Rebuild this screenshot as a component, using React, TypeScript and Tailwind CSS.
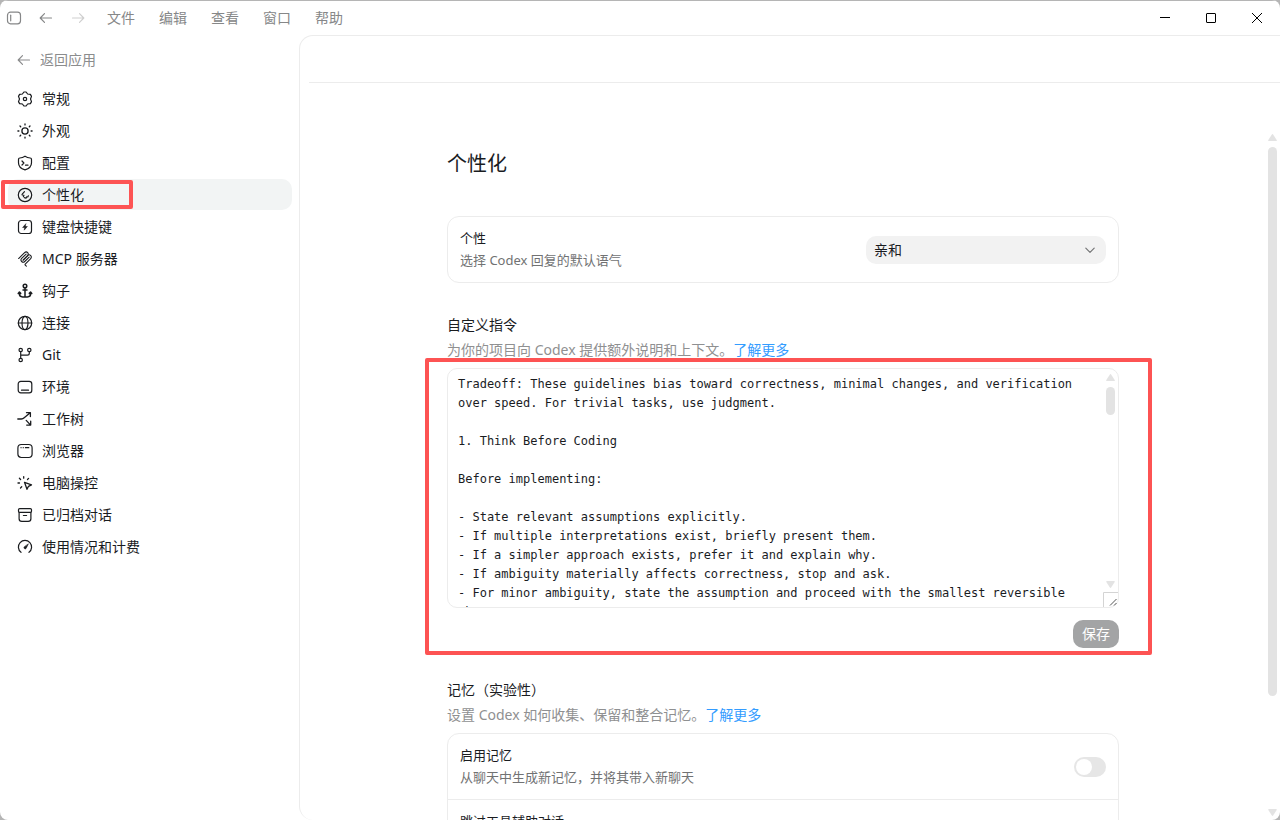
import type { ReactNode } from 'react';

function Icon({ children, className = 'size-4' }: { children: ReactNode; className?: string }) {
  return (
    <svg
      viewBox="0 0 16 16"
      className={`shrink-0 ${className}`}
      fill="none"
      stroke="currentColor"
      strokeWidth="1.2"
      strokeLinecap="round"
      strokeLinejoin="round"
      aria-hidden="true"
    >
      {children}
    </svg>
  );
}

const arrowLeft = <path d="M13.5 8H2.3M6.5 3.7 2.2 8l4.3 4.3" />;
const arrowRight = <path d="M2.5 8h11.2M9.5 3.7 13.8 8l-4.3 4.3" />;

const navItems: { label: string; icon: ReactNode; active?: boolean }[] = [
  {
    label: '常规',
    icon: (
      <>
        <path d="M6.9 1h2.2l1.5 2 2.8.4 1.1 2L13.5 8l1 2.600-1.100 2-2.800.4-1.500 2H6.900l-1.500-2-2.800-.4-1.100-2L2.500 8l-1-2.600 1.100-2L5.400 3Z" />
        <circle cx="8" cy="8" r="1.7" />
      </>
    ),
  },
  {
    label: '外观',
    icon: (
      <g strokeWidth="1.3">
        <circle cx="8" cy="8" r="3.1" />
        <path d="M8 .9v1M8 14.1v1M.9 8h1M14.1 8h1M3 3l.7.7M12.3 12.3l.7.7M3 13l.7-.7M12.3 3.7 13 3" />
      </g>
    ),
  },
  {
    label: '配置',
    icon: (
      <>
        <path d="M8 1.2c1.6 1 3.3 1.6 5.2 1.8.8.1 1.3.6 1.3 1.4v3.4c0 3.7-2.6 6-6.5 7.1-3.9-1.1-6.5-3.4-6.5-7.1V4.4c0-.8.5-1.3 1.3-1.4C4.7 2.8 6.4 2.2 8 1.2Z" />
        <path d="m5 6 1.9 2L5 10M8.5 10.2h2.5" />
      </>
    ),
  },
  {
    label: '个性化',
    active: true,
    icon: (
      <>
        <circle cx="8" cy="8" r="6.7" />
        <path d="M7.5 4.6 5.2 7.2c-.3.3-.1.7.3.8l1.4.3-.5 1.4M11.4 8.8l-.6 1.2-1.2-.1-.6 1.3-1.6-.6" />
      </>
    ),
  },
  {
    label: '键盘快捷键',
    icon: (
      <>
        <rect x="1.5" y="1.5" width="13" height="13" rx="2.8" />
        <path d="M8.700 4.900 5.600 8.500h2l-.4 2.700 3.200-3.700h-2Z" fill="currentColor" strokeWidth=".5" />
      </>
    ),
  },
  {
    label: 'MCP 服务器',
    icon: (
      <g transform="scale(.0889)" strokeWidth="12">
        <path d="M18 84.853 85.882 16.971c9.373-9.373 24.569-9.373 33.941 0 9.373 9.372 9.373 24.568 0 33.941l-51.265 51.265" />
        <path d="m69.265 101.47 50.558-50.558c9.373-9.373 24.569-9.373 33.942 0l.353.353c9.373 9.373 9.373 24.569 0 33.941L92.725 146.6c-3.124 3.124-3.124 8.189 0 11.313l12.606 12.607" />
        <path d="M102.853 33.941 52.648 84.146c-9.372 9.372-9.372 24.568 0 33.941 9.373 9.372 24.569 9.372 33.941 0l50.205-50.205" />
      </g>
    ),
  },
  {
    label: '钩子',
    icon: (
      <g strokeWidth="1.5">
        <circle cx="8" cy="3" r="1.8" />
        <path d="M8 4.8v9M6 7h4M1.2 10.400l1.200-1.300 1.300 1.300M14.800 10.400l-1.200-1.300-1.300 1.300M2.400 9.300v1.500c0 2 1.200 3.100 3.200 3.100h4.800c2 0 3.200-1.100 3.200-3.100V9.300" />
      </g>
    ),
  },
  {
    label: '连接',
    icon: (
      <>
        <circle cx="8" cy="8" r="6.7" />
        <ellipse cx="8" cy="8" rx="3" ry="6.7" />
        <path d="M1.3 8h13.4" />
      </>
    ),
  },
  {
    label: 'Git',
    icon: (
      <>
        <circle cx="3.7" cy="3" r="1.7" />
        <circle cx="12.3" cy="3" r="1.7" />
        <circle cx="3.7" cy="13" r="1.7" />
        <path d="M3.7 4.7v6.6M12.3 4.7v1.5c0 1.2-.7 1.9-1.9 1.9H3.7" />
      </>
    ),
  },
  {
    label: '环境',
    icon: (
      <>
        <rect x="1.2" y="2.3" width="13.6" height="11.6" rx="2.6" />
        <path d="M4.5 11.2h7" />
      </>
    ),
  },
  {
    label: '工作树',
    icon: (
      <path
        d="M.8 8h3.5c1.3 0 2-.3 2.9-1.2l6-5M9.500 1.700h3.900v3.900M9.200 9.400l4.200 4.500M13.700 10.200v3.900H9.700"
        strokeWidth="1.3"
      />
    ),
  },
  {
    label: '浏览器',
    icon: (
      <>
        <rect x=".9" y="1.5" width="14.2" height="13" rx="3.4" />
        <path d="M4 4.7h.1M6.2 4.7h.1M8.4 4.7h3.4" />
      </>
    ),
  },
  {
    label: '电脑操控',
    icon: (
      <g strokeWidth="1.3">
        <path d="m7.5 7.3 7 2.5-3 1.5-1.5 3Z" />
        <path d="M6.7 1.6v1.6M2.4 3.3l1.2 1.2M1 8h1.5M3.5 13l1.2-1.2M11.6 3.4l-1.1 1.1" />
      </g>
    ),
  },
  {
    label: '已归档对话',
    icon: (
      <>
        <rect x="1.5" y="1.6" width="13" height="3.8" rx="1.2" />
        <path d="M2.1 5.4v6.3c0 1.7 1 2.7 2.7 2.7h6.4c1.7 0 2.7-1 2.7-2.7V5.400M6.400 8.500h3.200" />
      </>
    ),
  },
  {
    label: '使用情况和计费',
    icon: (
      <>
        <path d="M4 13.3A6.6 6.6 0 1 1 12 13.3" />
        <path d="m11.2 5.2-2.1 4.2a1.2 1.2 0 1 1-1.9-1.5Z" fill="currentColor" strokeWidth=".6" />
      </>
    ),
  },
];

const instructions = `Tradeoff: These guidelines bias toward correctness, minimal changes, and verification over speed. For trivial tasks, use judgment.

1. Think Before Coding

Before implementing:

- State relevant assumptions explicitly.
- If multiple interpretations exist, briefly present them.
- If a simpler approach exists, prefer it and explain why.
- If ambiguity materially affects correctness, stop and ask.
- For minor ambiguity, state the assumption and proceed with the smallest reversible change.`;

function Triangle({ down = false }: { down?: boolean }) {
  return (
    <svg viewBox="0 0 9 7" className="h-[7px] w-[9px] shrink-0 fill-[#e3e3e3]" aria-hidden="true">
      {down ? (
        <path d="M1 0h7q1.2 0 .7 1L5.3 6.3q-.8 1.2-1.6 0L.3 1Q-.2 0 1 0Z" />
      ) : (
        <path d="M1 7h7q1.2 0 .7-1L5.3.7q-.8-1.2-1.6 0L.3 6Q-.2 7 1 7Z" />
      )}
    </svg>
  );
}

function TitleBar() {
  return (
    <header className="flex h-[35px] shrink-0 items-center justify-between border-t border-[#b5b5b5] text-[#868788]">
      <div className="flex items-center pl-[6px]">
        <button aria-label="切换边栏" className="flex">
          <Icon>
            <rect x="1.5" y="2.2" width="13" height="11.6" rx="3" />
            <path d="M4.7 5.2v5.6" />
          </Icon>
        </button>
        <button aria-label="后退" className="ml-4 flex">
          <Icon>{arrowLeft}</Icon>
        </button>
        <button aria-label="前进" className="ml-4 flex text-[#cfcfcf]">
          <Icon>{arrowRight}</Icon>
        </button>
        <nav className="ml-[21px] flex gap-6 text-[14px] leading-5">
          {['文件', '编辑', '查看', '窗口', '帮助'].map((m) => (
            <button key={m}>{m}</button>
          ))}
        </nav>
      </div>
      <div className="flex h-full text-black">
        <button aria-label="最小化" className="flex w-[46px] items-center justify-center">
          <svg viewBox="0 0 10 10" className="size-[10px]" stroke="currentColor" shapeRendering="crispEdges">
            <path d="M0 4.5h10" />
          </svg>
        </button>
        <button aria-label="最大化" className="flex w-[46px] items-center justify-center">
          <svg viewBox="0 0 10 10" className="size-[10px]" fill="none" stroke="currentColor">
            <rect x=".5" y=".5" width="9" height="9" rx=".5" />
          </svg>
        </button>
        <button aria-label="关闭" className="flex w-[46px] items-center justify-center">
          <svg viewBox="0 0 10 10" className="size-[10px]" stroke="currentColor">
            <path d="m0 0 10 10M10 0 0 10" />
          </svg>
        </button>
      </div>
    </header>
  );
}

function Sidebar() {
  return (
    <aside className="w-[299px] shrink-0 px-2">
      <a href="#" className="mt-[15px] flex h-5 items-center gap-2 pl-2 text-[14px] leading-5 text-[#8b8c8d]">
        <Icon>{arrowLeft}</Icon>
        返回应用
      </a>
      <nav className="mt-[13px] flex flex-col gap-px">
        {navItems.map((item) => (
          <a
            key={item.label}
            href="#"
            aria-current={item.active ? 'page' : undefined}
            className={`relative mr-[-1px] flex h-[31px] items-center gap-[9px] rounded-[10px] pl-[9px] text-[14px] leading-5 text-[#1a1c1f] ${
              item.active ? 'bg-[#f2f4f4]' : ''
            }`}
          >
            <Icon>{item.icon}</Icon>
            {item.label}
            {item.active && (
              <span className="absolute top-px -left-[7px] h-[29px] w-[132px] rounded-[2px] border-4 border-[#fd5353]" />
            )}
          </a>
        ))}
      </nav>
    </aside>
  );
}

function SectionHeading({ title, text }: { title: string; text: string }) {
  return (
    <>
      <h2 className="text-[14px] leading-5 text-[#1a1c1f]">{title}</h2>
      <p className="mt-[5px] text-[14px] leading-5 text-[#8f9091]">
        {text}
        <a href="#" className="text-[#339cff]">
          了解更多
        </a>
      </p>
    </>
  );
}

function SettingRow({
  id,
  title,
  text,
  children,
}: {
  id: string;
  title: string;
  text?: string;
  children: ReactNode;
}) {
  return (
    <div className="box-content flex min-h-[65px] items-center justify-between px-3">
      <div className="self-start pt-[11px] text-[13px]">
        <label htmlFor={id} className="block leading-5 text-[#1a1c1f]">
          {title}
        </label>
        {text && <p className="mt-[2px] leading-5 text-[#717273]">{text}</p>}
      </div>
      {children}
    </div>
  );
}

function Toggle({ id }: { id: string }) {
  return (
    <input
      id={id}
      type="checkbox"
      role="switch"
      className="h-5 w-8 shrink-0 appearance-none rounded-full bg-[#e6e6e6] p-[2px] before:block before:size-4 before:rounded-full before:bg-white"
    />
  );
}

export default function App() {
  return (
    <div className="h-screen bg-[#b5b5b5] font-['Noto_Sans','Noto_Sans_CJK_SC',sans-serif]">
      <div className="flex h-full flex-col overflow-hidden rounded-[8px] bg-white">
        <TitleBar />
        <div className="flex min-h-0 flex-1">
          <Sidebar />
          <div className="flex min-w-0 flex-1 flex-col overflow-hidden rounded-l-[14px] border-t border-l border-[#ececec]">
            <div className="ml-[9px] h-[47px] shrink-0 border-b border-[#ececec]" />
            <div className="flex min-h-0 flex-1">
              <main className="min-w-0 flex-1 overflow-hidden pl-px">
                <div className="mx-auto max-w-2xl pt-[67px]">
                  <h1 className="text-[20px] leading-7 text-[#1a1c1f]">个性化</h1>

                  <div className="mt-[38px] rounded-[12px] border border-[#ececec]">
                    <SettingRow id="tone" title="个性" text="选择 Codex 回复的默认语气">
                      <div className="relative w-60">
                        <select
                          id="tone"
                          className="block h-7 w-full appearance-none rounded-[10px] bg-[#f2f2f2] px-2 text-[14px] leading-5 text-[#1a1c1f]"
                        >
                          <option>亲和</option>
                        </select>
                        <span className="pointer-events-none absolute top-[6px] right-2 text-[#757677]">
                          <Icon>
                            <path d="m3.8 6.2 4.2 4.2 4.2-4.2" />
                          </Icon>
                        </span>
                      </div>
                    </SettingRow>
                  </div>

                  <section className="mt-8">
                    <SectionHeading title="自定义指令" text="为你的项目向 Codex 提供额外说明和上下文。" />
                    <div className="relative mt-2">
                      <div className="relative h-60">
                        <textarea
                          aria-label="自定义指令"
                          defaultValue={instructions}
                          spellCheck={false}
                          className="block h-full w-full resize-none overflow-hidden rounded-[10px] border border-[#ececec] pt-[6px] pr-[26px] pl-[10px] font-['DejaVu_Sans_Mono',monospace] text-[12px] leading-[19px] text-[#1a1c1f]"
                        />
                        <div className="absolute top-[6px] right-1 bottom-[20px] flex flex-col justify-between">
                          <div className="flex flex-col gap-[6px]">
                            <Triangle />
                            <span className="h-7 w-[9px] rounded-full bg-[#e3e3e3]" />
                          </div>
                          <Triangle down />
                        </div>
                        <svg
                          viewBox="0 0 15 15"
                          className="absolute right-px bottom-px size-[15px]"
                          fill="none"
                          aria-hidden="true"
                        >
                          <path d="M.5 15V.5H15" stroke="#d4d4d4" />
                          <path d="m7 13.5 6.500-6.500M11 13.500l2.500-2.500" stroke="#555" />
                        </svg>
                      </div>
                      <div className="mt-3 flex justify-end">
                        <button className="h-7 rounded-[10px] bg-[#a3a4a5] px-[9px] text-[14px] leading-5 text-white">
                          保存
                        </button>
                      </div>
                      <span className="pointer-events-none absolute -top-[10px] -right-[33px] -bottom-[7px] -left-[22px] rounded-[2px] border-4 border-[#fd5353]" />
                    </div>
                  </section>

                  <section className="mt-8">
                    <SectionHeading title="记忆（实验性）" text="设置 Codex 如何收集、保留和整合记忆。" />
                    <div className="mt-2 divide-y divide-[#ececec] rounded-[12px] border border-[#ececec]">
                      <SettingRow id="memory" title="启用记忆" text="从聊天中生成新记忆，并将其带入新聊天">
                        <Toggle id="memory" />
                      </SettingRow>
                      <SettingRow id="skip-tools" title="跳过工具辅助对话">
                        <Toggle id="skip-tools" />
                      </SettingRow>
                    </div>
                  </section>
                </div>
              </main>
              <div className="flex w-[15px] flex-col items-center pt-[51px] pb-1" aria-hidden="true">
                <Triangle />
                <span className="mt-[6px] h-[549px] w-[9px] rounded-full bg-[#e3e3e3]" />
                <span className="mt-auto flex">
                  <Triangle down />
                </span>
              </div>
            </div>
          </div>
        </div>
      </div>
    </div>
  );
}
